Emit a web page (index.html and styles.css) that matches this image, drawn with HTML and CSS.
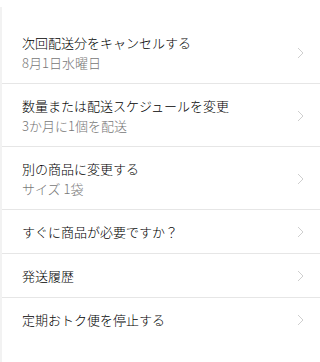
FILE: index.html
```html
<!DOCTYPE html>
<html lang="ja">
<head>
<meta charset="utf-8">
<link rel="stylesheet" href="styles.css">
</head>
<body>
<div class="panel">
  <ul class="menu">
    <li class="item two">
      <div class="text">
        <div class="title">次回配送分をキャンセルする</div>
        <div class="sub">8月1日水曜日</div>
      </div>
      <svg class="chev" width="7" height="12" viewBox="0 0 7 12"><path d="M1 1 L6 6 L1 11" fill="none" stroke="#cfcfcf" stroke-width="1"/></svg>
    </li>
    <li class="item two">
      <div class="text">
        <div class="title">数量または配送スケジュールを変更</div>
        <div class="sub">3か月に1個を配送</div>
      </div>
      <svg class="chev" width="7" height="12" viewBox="0 0 7 12"><path d="M1 1 L6 6 L1 11" fill="none" stroke="#cfcfcf" stroke-width="1"/></svg>
    </li>
    <li class="item two">
      <div class="text">
        <div class="title">別の商品に変更する</div>
        <div class="sub">サイズ 1袋</div>
      </div>
      <svg class="chev" width="7" height="12" viewBox="0 0 7 12"><path d="M1 1 L6 6 L1 11" fill="none" stroke="#cfcfcf" stroke-width="1"/></svg>
    </li>
    <li class="item">
      <div class="text">
        <div class="title">すぐに商品が必要ですか？</div>
      </div>
      <svg class="chev" width="7" height="12" viewBox="0 0 7 12"><path d="M1 1 L6 6 L1 11" fill="none" stroke="#cfcfcf" stroke-width="1"/></svg>
    </li>
    <li class="item">
      <div class="text">
        <div class="title">発送履歴</div>
      </div>
      <svg class="chev" width="7" height="12" viewBox="0 0 7 12"><path d="M1 1 L6 6 L1 11" fill="none" stroke="#cfcfcf" stroke-width="1"/></svg>
    </li>
    <li class="item last">
      <div class="text">
        <div class="title">定期おトク便を停止する</div>
      </div>
      <svg class="chev" width="7" height="12" viewBox="0 0 7 12"><path d="M1 1 L6 6 L1 11" fill="none" stroke="#cfcfcf" stroke-width="1"/></svg>
    </li>
  </ul>
</div>
</body>
</html>
```
FILE: styles.css
```css
html, body {
  margin: 0;
  padding: 0;
  background: #ffffff;
}
body {
  font-family: "Noto Sans CJK JP", "Liberation Sans", sans-serif;
  font-size: 13px;
  font-weight: 300;
  color: #111111;
}
.panel {
  margin-top: 7px;
  border-left: 2px solid #f2f2f2;
  min-height: 355px;
  padding-top: 14px;
  box-sizing: border-box;
}
.menu {
  list-style: none;
  margin: 0;
  padding: 0;
}
.item {
  display: flex;
  align-items: center;
  justify-content: space-between;
  padding: 12px 16px 11px 20px;
  line-height: 20px;
  border-bottom: 1px solid #e6e6e6;
}
.item.two {
  padding-bottom: 10px;
}
.item.last {
  border-bottom: none;
}
.title {
  color: #000000;
  white-space: nowrap;
}
.sub {
  color: #777777;
  white-space: nowrap;
}
.chev {
  display: block;
  flex: none;
}
```
